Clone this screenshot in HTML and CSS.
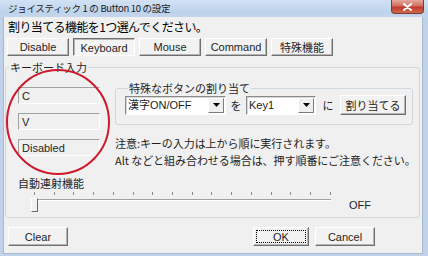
FILE: index.html
```html
<!DOCTYPE html>
<html lang="ja">
<head>
    <meta charset="UTF-8">
    <title>ジョイスティック 1 の Button 10 の設定</title>
    <link rel="stylesheet" href="styles.css">
</head>
<body>

    <div class="window">
        <!-- Title bar -->
        <div class="titlebar">
            <span class="title">ジョイスティック 1 の Button 10 の設定</span>
            <div class="close">
                <svg width="11" height="8" viewBox="0 0 11 8">
                    <path d="M2 1 L9 7 M9 1 L2 7" stroke="#fff" stroke-width="2" stroke-linecap="round"/>
                </svg>
            </div>
        </div>

        <div class="client">
            <div class="heading">割り当てる機能を1つ選んでください。</div>

            <!-- Mode selection -->
            <div class="modes">
                <button class="btn mode">Disable</button>
                <button class="btn mode pressed">Keyboard</button>
                <button class="btn mode">Mouse</button>
                <button class="btn mode">Command</button>
                <button class="btn mode">特殊機能</button>
            </div>

            <!-- Keyboard input -->
            <fieldset class="group">
                <legend>キーボード入力</legend>
                <div class="group-body">
                    <div class="keys">
                        <div class="keybox">C</div>
                        <div class="keybox">V</div>
                        <div class="keybox">Disabled</div>
                    </div>
                    <div class="side">
                        <fieldset class="group special">
                            <legend>特殊なボタンの割り当て</legend>
                            <div class="assign">
                                <div class="combo combo-special">
                                    <span class="combo-text">漢字ON/OFF</span>
                                    <span class="combo-arrow"><svg width="7" height="4" viewBox="0 0 7 4"><path d="M0 0 H7 L3.5 4 Z" fill="#000"/></svg></span>
                                </div>
                                <span class="particle">を</span>
                                <div class="combo combo-key">
                                    <span class="combo-text">Key1</span>
                                    <span class="combo-arrow"><svg width="7" height="4" viewBox="0 0 7 4"><path d="M0 0 H7 L3.5 4 Z" fill="#000"/></svg></span>
                                </div>
                                <span class="particle particle-ni">に</span>
                                <button class="btn assign-btn">割り当てる</button>
                            </div>
                        </fieldset>
                        <p class="note">注意:キーの入力は上から順に実行されます。</p>
                        <p class="note">Alt などと組み合わせる場合は、押す順番にご注意ください。</p>
                    </div>
                </div>

                <div class="repeat-label">自動連射機能</div>
                <div class="slider-row">
                    <div class="slider">
                        <div class="ticks">
                            <span></span><span></span><span></span><span></span>
                            <span></span><span></span><span></span><span></span>
                            <span></span><span></span><span></span><span></span>
                            <span></span><span></span><span></span><span></span>
                        </div>
                        <div class="track"></div>
                        <div class="thumb"></div>
                    </div>
                    <span class="slider-value">OFF</span>
                </div>
            </fieldset>

            <!-- Dialog buttons -->
            <div class="footer">
                <button class="btn footer-btn">Clear</button>
                <button class="btn footer-btn ok"><span class="focus">OK</span></button>
                <button class="btn footer-btn">Cancel</button>
            </div>
        </div>

        <!-- Red annotation circle -->
        <svg class="mark" width="428" height="256" viewBox="0 0 428 256">
            <ellipse cx="58" cy="122" rx="51" ry="52" fill="none" stroke="#cc1a2c" stroke-width="2"/>
        </svg>
    </div>

</body>
</html>
```

FILE: styles.css
```css
* {
    box-sizing: border-box;
}
body {
    margin: 0;
    font-family: "Liberation Sans", "Noto Sans CJK JP", sans-serif;
    font-size: 11px;
    color: #1e1e1e;
}
.window {
    position: relative;
    width: 428px;
    height: 256px;
    display: flex;
    flex-direction: column;
    background: #bfd2e9;
    overflow: hidden;
}

/* Title bar */
.titlebar {
    height: 17px;
    flex-shrink: 0;
    display: flex;
    align-items: flex-start;
    padding-left: 8px;
    background: linear-gradient(to bottom, #d2e2f4 0%, #bed3ec 70%, #c3d6ec 100%);
}
.title {
    font-family: "Noto Sans CJK JP", sans-serif;
    font-size: 9.5px;
    line-height: 16px;
    letter-spacing: -0.3px;
    color: #1b1b1b;
}
.close {
    margin-left: auto;
    margin-right: 4px;
    width: 33px;
    height: 14px;
    display: flex;
    align-items: center;
    justify-content: center;
    border: 1px solid #7b3a33;
    border-top: none;
    border-radius: 0 0 4px 4px;
    background: linear-gradient(to bottom, #e5a89c 0%, #d0705f 45%, #c0392b 55%, #cf6a4c 100%);
}

/* Client area */
.client {
    flex: 1;
    min-height: 0;
    margin: 0 5px 2px 3px;
    background: #f0f0f0;
    border: 1px solid #a9b8ca;
    border-top: none;
    display: flex;
    flex-direction: column;
}
.heading {
    margin: 1px 0 0 4px;
    font-family: "Noto Sans CJK JP", sans-serif;
    font-size: 12px;
    line-height: 17px;
    letter-spacing: -0.6px;
    white-space: nowrap;
    color: #000;
}

/* Buttons */
.btn {
    font-family: "Liberation Sans", "Noto Sans CJK JP", sans-serif;
    font-size: 11px;
    color: #1e1e1e;
    padding: 0;
    background: #f2f2f2;
    border: 1px solid;
    border-color: #fff #6f6f6f #6f6f6f #fff;
    box-shadow: inset -1px -1px 0 #b5b5b5;
}
.btn.pressed {
    border-color: #6f6f6f #fff #fff #6f6f6f;
    box-shadow: inset 1px 1px 0 #b5b5b5;
    background: #f4f4f4;
    padding-top: 1px;
}
.modes {
    display: flex;
    gap: 4px;
    margin: 3px 0 0 3px;
}
.mode {
    width: 62px;
    height: 18px;
}

/* Group boxes */
.group {
    margin: 5px 2px 0 1px;
    padding: 0 0 5px 0;
    border: 1px solid #cfd8df;
    border-radius: 3px;
    min-width: 0;
}
.group legend {
    margin-left: 3px;
    padding: 0 1px;
    font-family: "Noto Sans CJK JP", sans-serif;
    font-size: 11px;
    line-height: 13px;
}
.group-body {
    display: flex;
    margin-top: 8px;
}
.keys {
    display: flex;
    flex-direction: column;
    gap: 9px;
    margin: 5px 0 0 12px;
    width: 82px;
}
.keybox {
    height: 17px;
    padding: 2px 0 0 3px;
    border: 1px solid;
    border-color: #a0a0a0 #fff #fff #a0a0a0;
    font-size: 11px;
    line-height: 13px;
}
.side {
    flex: 1;
    min-width: 0;
    margin: 0 6px 0 15px;
}
.special {
    margin: 0;
    padding: 1px 0 9px 9px;
}
.special legend {
    line-height: 12px;
}
.assign {
    display: flex;
    align-items: center;
    height: 20px;
}
.combo {
    height: 19px;
    display: flex;
    align-items: center;
    background: #fff;
    border: 1px solid;
    border-color: #8a8a8a #fff #fff #8a8a8a;
    box-shadow: inset 1px 1px 0 #d8d8d8;
}
.combo-special {
    width: 101px;
}
.combo-key {
    width: 70px;
}
.combo-text {
    flex: 1;
    padding-left: 2px;
    font-size: 11px;
    line-height: 13px;
}
.combo-arrow {
    width: 16px;
    height: 15px;
    margin-right: 1px;
    display: flex;
    align-items: center;
    justify-content: center;
    background: #f0f0f0;
    border: 1px solid;
    border-color: #fff #7a7a7a #7a7a7a #fff;
}
.particle {
    width: 20px;
    text-align: center;
    font-family: "Noto Sans CJK JP", sans-serif;
    font-size: 11px;
}
.particle-ni {
    width: 24px;
}
.assign-btn {
    width: 66px;
    height: 20px;
    font-family: "Noto Sans CJK JP", sans-serif;
}
.note {
    margin: 0;
    font-family: "Noto Sans CJK JP", sans-serif;
    font-size: 11px;
    line-height: 17px;
    letter-spacing: -0.05px;
    white-space: nowrap;
}
.special + .note {
    margin-top: 10px;
}

/* Auto repeat slider */
.repeat-label {
    margin: 8px 0 0 12px;
    font-family: "Noto Sans CJK JP", sans-serif;
    font-size: 11px;
    line-height: 12px;
}
.slider-row {
    display: flex;
}
.slider {
    position: relative;
    width: 300px;
    height: 23px;
    margin-left: 25px;
}
.ticks {
    display: flex;
    justify-content: space-between;
    height: 3px;
    margin: 3px 0 0 3px;
}
.ticks span {
    width: 1px;
    height: 3px;
    background: #8a8a8a;
}
.track {
    height: 2px;
    margin: 4px 0 0 6px;
    border-top: 1px solid #a0a0a0;
    border-bottom: 1px solid #fff;
}
.thumb {
    position: absolute;
    left: 0;
    top: 9px;
    width: 7px;
    height: 14px;
    border: 1px solid;
    border-color: #fff #6a6a6a #6a6a6a #fff;
    background: #f0f0f0;
}
.slider-value {
    margin: 10px 0 0 18px;
    font-size: 11px;
    line-height: 12px;
}

/* Footer */
.footer {
    display: flex;
    margin-top: 9px;
    padding: 0 47px 0 4px;
}
.footer-btn {
    width: 60px;
    height: 19px;
}
.ok {
    width: 56px;
    margin-left: auto;
    margin-right: 6px;
    padding: 2px;
}
.focus {
    display: flex;
    align-items: center;
    justify-content: center;
    height: 100%;
    border: 1px dotted #000;
}

/* Annotation */
.mark {
    position: absolute;
    left: 0;
    top: 0;
    pointer-events: none;
}
```
